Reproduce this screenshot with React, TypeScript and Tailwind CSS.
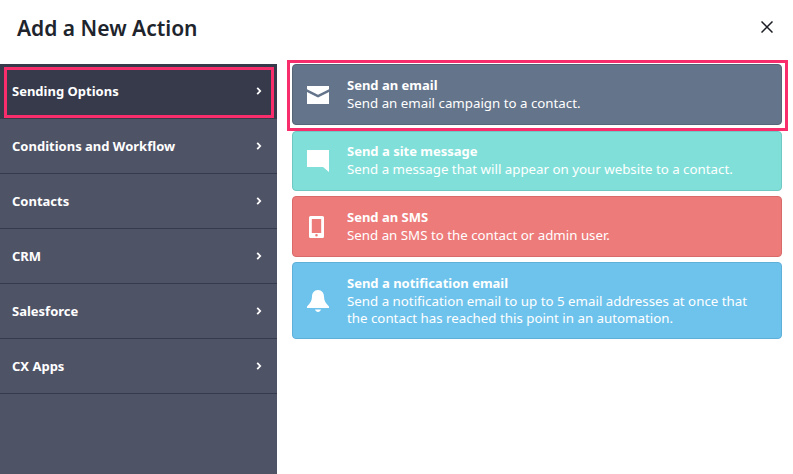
import React from 'react';

const menuItems = ['Sending Options', 'Conditions and Workflow', 'Contacts', 'CRM', 'Salesforce', 'CX Apps'];

const EmailIcon = () => (
  <svg width="22" height="18" viewBox="0 0 22 18" fill="white">
    <path d="M0 0h22v3.200L11 8.800 0 3.200z" />
    <path d="M0 6l11 5.600L22 6v12H0z" />
  </svg>
);

const MessageIcon = () => (
  <svg width="22" height="22" viewBox="0 0 22 22" fill="white">
    <path d="M0 0h22v22l-6-5H0z" />
  </svg>
);

const PhoneIcon = () => (
  <svg className="mr-[3px]" width="15" height="22" viewBox="0 0 15 22" fill="white">
    <path
      fillRule="evenodd"
      d="M1.500 0h12A1.500 1.500 0 0115 1.500v19a1.500 1.500 0 01-1.500 1.500h-12A1.500 1.500 0 010 20.500v-19A1.500 1.500 0 011.500 0zM2.800 3v14h9.400V3zM7.500 18a1.300 1.300 0 100 2.600 1.300 1.300 0 000-2.600z"
    />
  </svg>
);

const BellIcon = () => (
  <svg width="22" height="22" viewBox="0 0 22 22" fill="white">
    <path d="M11 0c3.800 0 6 3 6 6.500 0 4 1.500 6.500 5 10v1.500H0v-1.500c3.500-3.500 5-6 5-10C5 3 7.200 0 11 0z" />
    <path d="M8 19.500h6c-.5 1.600-1.600 2.500-3 2.500s-2.500-.9-3-2.500z" />
  </svg>
);

const actions = [
  { title: 'Send an email', lines: ['Send an email campaign to a contact.'], icon: <EmailIcon />, className: 'mb-px h-[61px] bg-[#64748a] border-[#566477]', textClass: 'pb-[1px]' },
  { title: 'Send a site message', lines: ['Send a message that will appear on your website to a contact.'], icon: <MessageIcon />, className: 'h-[60px] bg-[#80e0d9] border-[#70c8c2]', textClass: 'pb-[1px]' },
  { title: 'Send an SMS', lines: ['Send an SMS to the contact or admin user.'], icon: <PhoneIcon />, className: 'h-[61px] bg-[#ed7b7a] border-[#d86b6a]', textClass: 'pb-[1px]' },
  {
    title: 'Send a notification email',
    lines: ['Send a notification email to up to 5 email addresses at once that', 'the contact has reached this point in an automation.'],
    icon: <BellIcon />,
    className: 'h-[77px] bg-[#6ec3ec] border-[#5fb0d8]',
    textClass: 'pt-[1px]',
  },
];

export default function App() {
  return (
    <div className="h-[474px] w-[793px] overflow-hidden bg-white font-['Noto_Sans',sans-serif]">
      <div className="flex h-[64px] items-center justify-between pb-[8px] pl-[17px] pr-[20px]">
        <h1 className="text-[21px] font-semibold leading-none text-[#20242c]">Add a New Action</h1>
        <svg className="mb-[3px]" width="12" height="12" viewBox="0 0 12 12" stroke="#1a1d24" strokeWidth="1.500" fill="none">
          <path d="M.5.500l11 11M11.500.500l-11 11" />
        </svg>
      </div>
      <div className="flex h-[410px]">
        <nav className="relative w-[277px] bg-[#4f5366]">
          {menuItems.map((item, i) => (
            <div
              key={item}
              className={`flex h-[55px] items-center justify-between pl-[12px] pr-[15px] text-[13px] font-bold text-white ${
                i === 0 ? 'bg-[#363a4b]' : 'border-b border-[#363a4b] pt-[1px]'
              }`}
            >
              <span>{item}</span>
              <svg className="mb-[2px]" width="6" height="8" viewBox="0 0 6 8" fill="none" stroke="white" strokeWidth="1.800">
                <path d="M1.200.800l3 3.200-3 3.200" />
              </svg>
            </div>
          ))}
          <div className="absolute left-[4px] top-[3px] h-[51px] w-[270px] border-[3px] border-[#f72d6c]" />
        </nav>
        <main className="relative flex flex-1 flex-col gap-[5px] pl-[15px] pr-[11px]">
          {actions.map((a) => (
            <div key={a.title} className={`flex items-center rounded-[4px] border text-white ${a.className}`}>
              <div className="flex w-[54px] shrink-0 justify-center pr-[4px]">{a.icon}</div>
              <div className={`text-[13.300px] leading-[17px] ${a.textClass}`}>
                <div className="mb-px text-[13px] font-bold">{a.title}</div>
                {a.lines.map((l) => (
                  <div key={l}>{l}</div>
                ))}
              </div>
            </div>
          ))}
          <div className="absolute left-[10px] top-[-4px] h-[71px] w-[501px] border-[3px] border-[#f72d6c]" />
        </main>
      </div>
    </div>
  );
}
